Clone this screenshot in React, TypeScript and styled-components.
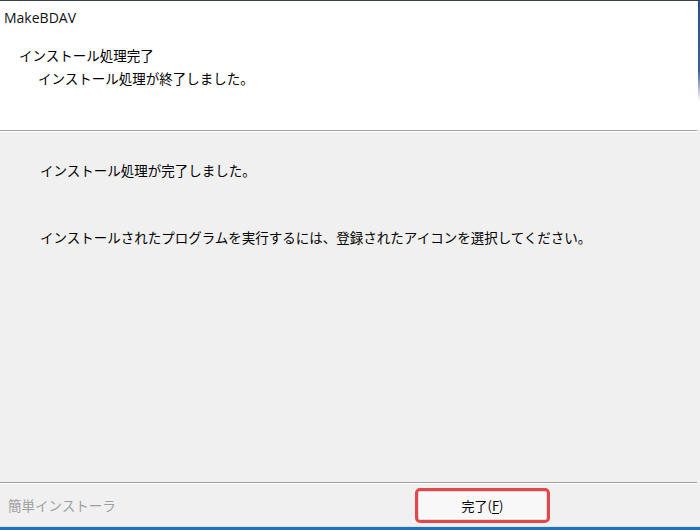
import React from "react";
import styled, { createGlobalStyle } from "styled-components";

const Global = createGlobalStyle`
  html, body { margin: 0; padding: 0; background: #f0f0f0; }
  * { box-sizing: border-box; }
`;

const jp = `"Noto Sans CJK JP", "Noto Sans", sans-serif`;

const Window = styled.div`
  width: 700px;
  height: 530px;
  display: flex;
  flex-direction: column;
  background: #f0f0f0;
  border-top: 1px solid #34414e;
  overflow: hidden;
`;

const Header = styled.div`
  height: 129px;
  background: #ffffff;
  border-right: 2px solid #ffffff;
  display: flex;
  flex-direction: column;
  padding: 7px 0 0 4px;
  position: relative;
`;

const EdgeAccent = styled.div`
  position: absolute;
  right: -2px;
  top: 0;
  width: 2px;
  height: 100px;
  background: linear-gradient(#2c4d86, #3d5f96 70%, rgba(61, 95, 150, 0));
`;

const Title = styled.div`
  font-family: "Open Sans", "Noto Sans", sans-serif;
  font-size: 14px;
  line-height: 19px;
  color: #111;
`;

const HeadingBlock = styled.div`
  margin-top: 17px;
  display: flex;
  flex-direction: column;
`;

const JpLine = styled.div<{ $indent: number; $color?: string; $size?: number }>`
  font-family: ${jp};
  font-size: ${(p) => p.$size ?? 13}px;
  line-height: 23px;
  color: ${(p) => p.$color ?? "#000"};
  padding-left: ${(p) => p.$indent}px;
  white-space: nowrap;
`;

const Divider = styled.div<{ $gap?: number }>`
  height: 2px;
  border-top: 1px solid #a0a0a0;
  border-bottom: 1px solid #ffffff;
  margin-right: 3px;
  margin-top: ${(p) => p.$gap ?? 0}px;
`;

const Body = styled.div`
  flex: 1;
  display: flex;
  flex-direction: column;
  gap: 47px;
  padding: 28px 0 0 40px;
`;

const BodyLine = styled.div`
  font-family: ${jp};
  font-size: 13.5px;
  line-height: 20px;
  color: #000;
  white-space: nowrap;
`;

const Footer = styled.div`
  height: 42px;
  display: flex;
  align-items: center;
  padding: 0 0 0 8px;
`;

const Brand = styled.div`
  font-family: ${jp};
  font-size: 13.5px;
  color: #9e9e9e;
  width: 407px;
  white-space: nowrap;
`;

const FinishButton = styled.button`
  width: 135px;
  height: 35px;
  border: 3px solid #e3474b;
  border-radius: 5px;
  background: #f8f8f8;
  font-family: ${jp};
  font-size: 13px;
  color: #000;
  padding: 0;
  display: flex;
  align-items: center;
  justify-content: center;
  box-shadow: inset 0 0 0 1px #dcdcdc;
`;

const Accel = styled.span`
  text-decoration: underline;
  text-underline-offset: 2px;
`;

const BottomEdge = styled.div`
  height: 4px;
  border-top: 1px solid #d4e6f4;
  background: #2372b5;
`;

export default function App() {
  return (
    <>
      <Global />
      <Window>
        <Header>
          <EdgeAccent />
          <Title>MakeBDAV</Title>
          <HeadingBlock>
            <JpLine $indent={15} $size={13.5}>インストール処理完了</JpLine>
            <JpLine $indent={34} $size={13.5}>インストール処理が終了しました。</JpLine>
          </HeadingBlock>
        </Header>
        <Divider />
        <Body>
          <BodyLine>インストール処理が完了しました。</BodyLine>
          <BodyLine>インストールされたプログラムを実行するには、登録されたアイコンを選択してください。</BodyLine>
        </Body>
        <Divider />
        <Footer>
          <Brand>簡単インストーラ</Brand>
          <FinishButton>
            完了(<Accel>F</Accel>)
          </FinishButton>
        </Footer>
        <BottomEdge />
      </Window>
    </>
  );
}
